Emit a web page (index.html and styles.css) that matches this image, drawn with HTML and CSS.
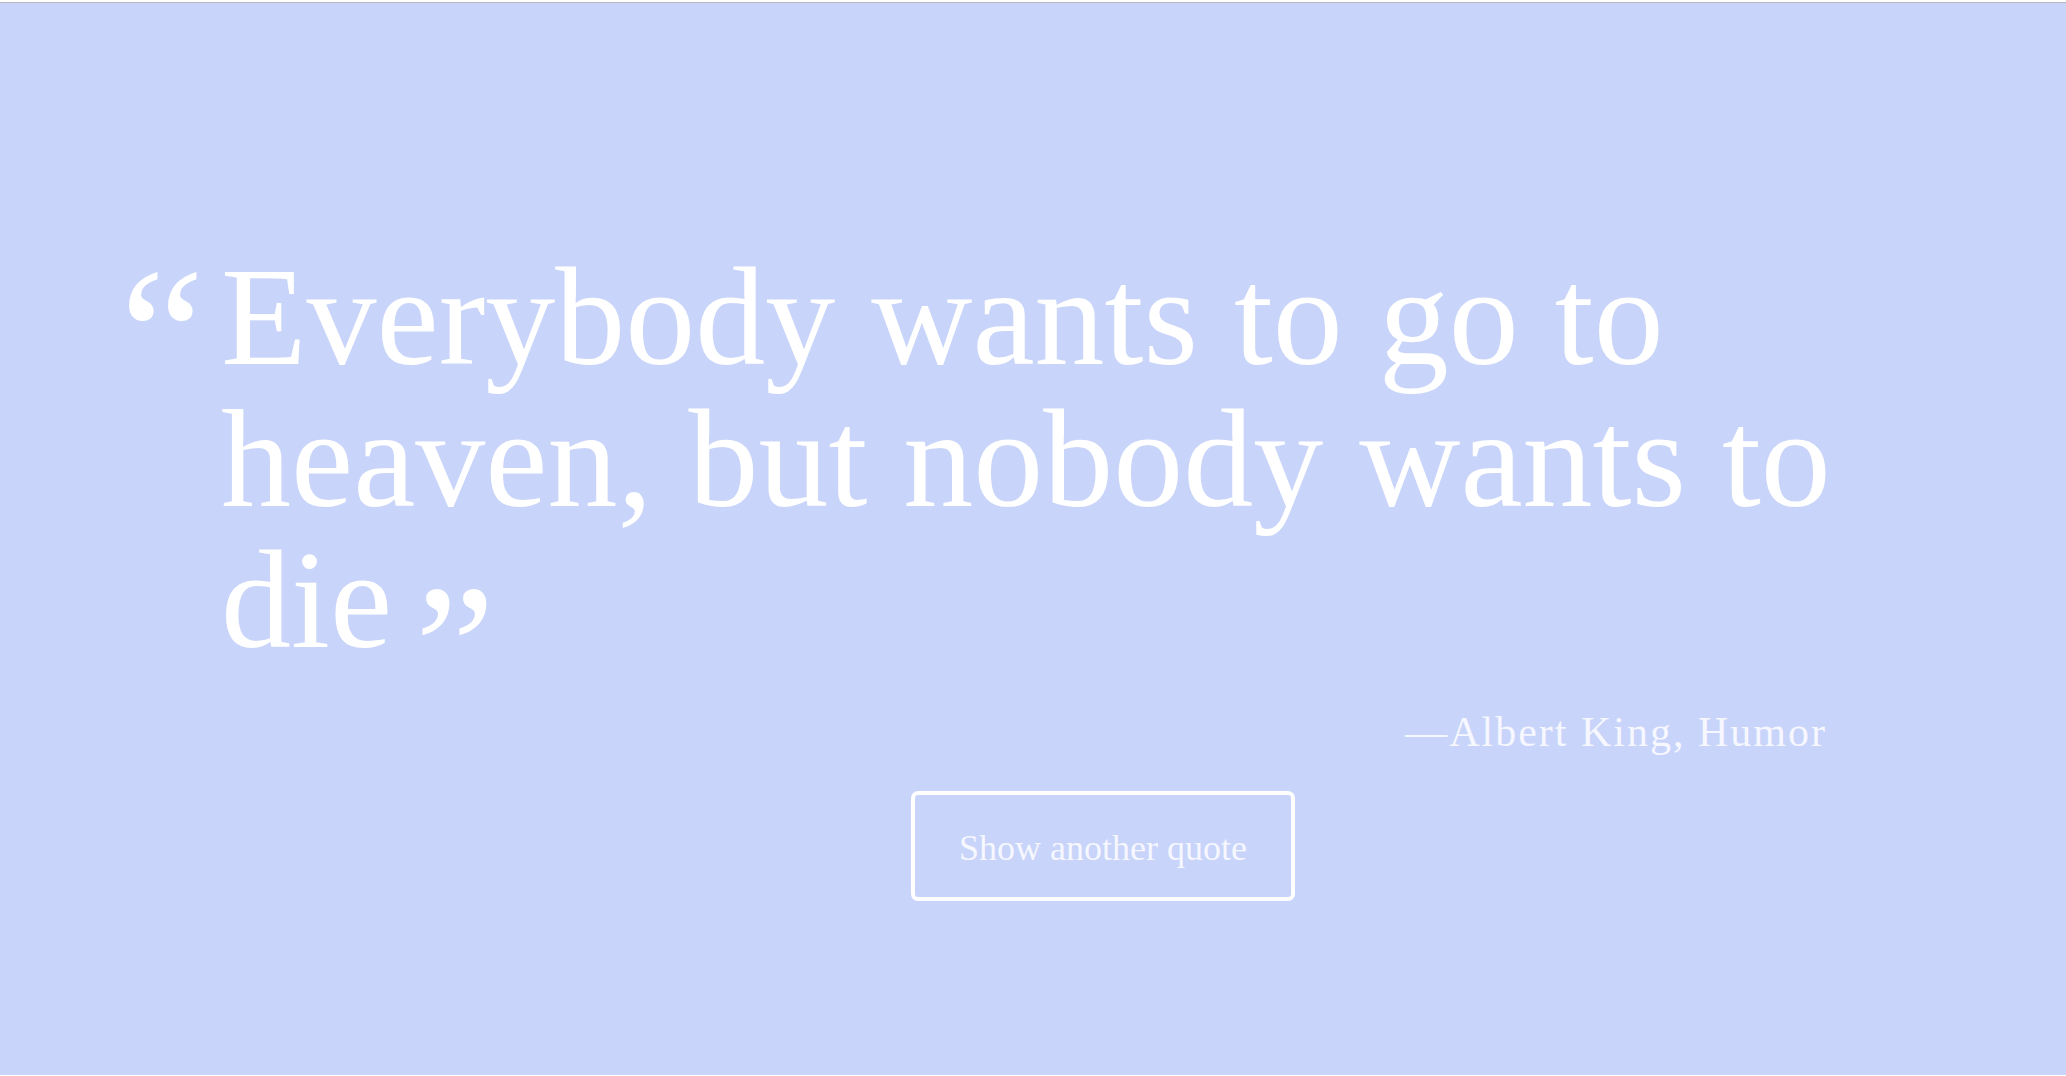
FILE: index.html
```html
<!DOCTYPE html>
<html lang="en">
<head>
<meta charset="utf-8">
<title>Random Quote</title>
<link rel="stylesheet" href="styles.css">
</head>
<body>
<main class="page">
  <section class="quote-box">
    <div class="quote-row">
      <span class="mark-open">“</span>
      <p class="quote-text">Everybody wants to go to heaven, but nobody wants to die <span class="mark-close">”</span></p>
    </div>
    <p class="author">—Albert King, Humor</p>
    <div class="actions">
      <button class="new-quote" type="button">Show another quote</button>
    </div>
  </section>
</main>
</body>
</html>
```
FILE: styles.css
```css
html, body {
  margin: 0;
  padding: 0;
  background: #ffffff;
}

.page {
  margin-top: 2px;
  border-top: 1px solid #b6b6b8;
  background: #c8d4f9;
  height: 1073px;
  box-sizing: border-box;
  font-family: "Liberation Serif", "Times New Roman", serif;
  color: #ffffff;
  overflow: hidden;
}

.quote-box {
  padding-top: 243px;
  margin-left: 120px;
  width: 1740px;
}

.quote-row {
  display: flex;
  align-items: flex-start;
}

.mark-open {
  flex: 0 0 101px;
  font-size: 190px;
  line-height: 1;
  margin-top: -6px;
}

.quote-text {
  margin: 0;
  font-size: 140px;
  line-height: 141.5px;
  word-spacing: 1px;
}

.mark-close {
  font-size: 180px;
  line-height: 0;
  vertical-align: -62px;
  margin-left: -13px;
}

.author {
  margin: 37px 33px 0 0;
  text-align: right;
  font-size: 42px;
  letter-spacing: 2px;
  color: #f6f7ff;
}

.actions {
  margin-top: 35px;
  padding-left: 791px;
}

.new-quote {
  width: 384px;
  height: 110px;
  border: 4px solid #ffffff;
  border-radius: 7px;
  background: transparent;
  color: #f6f7ff;
  font-family: "Liberation Serif", "Times New Roman", serif;
  font-size: 36px;
  padding: 5px 0 0;
}
```
